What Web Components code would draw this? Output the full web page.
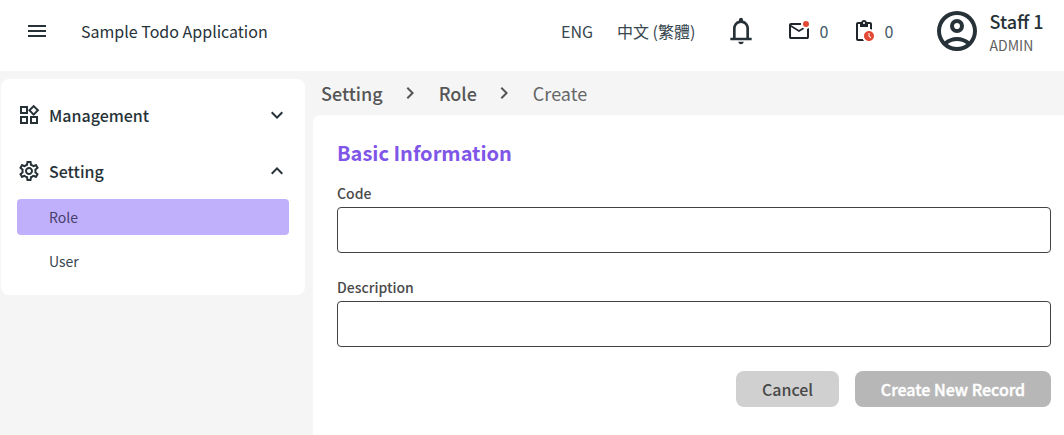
<!DOCTYPE html>
<html lang="zh-Hant">
<head>
<meta charset="utf-8">
<title>Sample Todo Application</title>
<style>
html,body{margin:0;height:100%;overflow:hidden}
body{font-family:"Noto Sans CJK TC","Noto Sans",sans-serif;color:#263238;background:#f5f5f5}
</style>
</head>
<body>
<todo-app></todo-app>
<script>
const ICONS={
menu:'<path d="M3 18h18v-2H3v2zm0-5h18v-2H3v2zm0-7v2h18V6H3z"/>',
bell:'<path d="M4 19v-2h2v-7q0-2.075 1.25-3.687T10.5 4.2v-.7q0-.625.438-1.062T12 2t1.063.438T13.5 3.5v.7q2 .5 3.25 2.113T18 10v7h2v2zm8 3q-.825 0-1.412-.587T10 20h4q0 .825-.587 1.413T12 22m-4-5h8v-7q0-1.65-1.175-2.825T12 6T9.175 7.175T8 10z"/>',
mail:'<path d="M4 20q-.825 0-1.412-.587T2 18V6q0-.825.588-1.412T4 4h10.1q-.1.5-.1 1t.1 1H4l8 5 3.65-2.275q.375.35.813.613t.912.462L12 13 4 8v10h16V9.9q.575-.125 1.075-.35T22 9v9q0 .825-.587 1.413T20 20z"/><circle cx="19" cy="5" r="3" fill="#e24a33"/>',
tasks:'<path d="M18 3h-3.18C14.4 1.84 13.3 1 12 1s-2.4.84-2.82 2H6c-1.1 0-2 .9-2 2v15c0 1.1.9 2 2 2h6.11c-.59-.57-1.07-1.25-1.42-2H6V5h2v3h8V5h2v5.08c.71.1 1.38.31 2 .6V5c0-1.1-.9-2-2-2zm-6 2c-.55 0-1-.45-1-1s.45-1 1-1 1 .45 1 1-.45 1-1 1z"/><path fill="#e24a33" d="M17 12c-2.76 0-5 2.24-5 5s2.24 5 5 5 5-2.24 5-5-2.24-5-5-5zm1.65 7.35L16.5 17.2V14h1v2.79l1.85 1.85-.7.71z"/>',
account:'<path d="M5.85 17.1q1.275-.975 2.85-1.537T12 15t3.3.563 2.85 1.537q.875-1.025 1.363-2.325T20 12q0-3.325-2.337-5.663T12 4 6.338 6.337 4 12q0 1.475.488 2.775T5.85 17.1M12 13q-1.475 0-2.488-1.012T8.5 9.5t1.013-2.488T12 6t2.488 1.013T15.5 9.5t-1.012 2.488T12 13m0 9q-2.075 0-3.9-.788t-3.175-2.137-2.137-3.175T2 12t.788-3.9 2.137-3.175T8.1 2.788 12 2t3.9.788 3.175 2.137T21.213 8.1 22 12t-.788 3.9-2.137 3.175-3.175 2.138T12 22m0-2q1.325 0 2.5-.387t2.15-1.113q-.975-.725-2.15-1.112T12 17t-2.5.388T7.35 18.5q.975.725 2.15 1.113T12 20m0-9q.65 0 1.075-.425T13.5 9.5t-.425-1.075T12 8t-1.075.425T10.5 9.5t.425 1.075T12 11"/>',
widgets:'<path d="M16.66 4.52l2.83 2.83-2.83 2.83-2.83-2.83 2.83-2.83M9 5v4H5V5h4m10 10v4h-4v-4h4M9 15v4H5v-4h4m7.66-13.31L11 7.34 16.66 13l5.66-5.66-5.66-5.65zM11 3H3v8h8V3zm10 10h-8v8h8v-8zm-10 0H3v8h8v-8z"/>',
settings:'<path d="M19.43 12.98c.04-.32.07-.64.07-.98 0-.34-.03-.66-.07-.98l2.11-1.65c.19-.15.24-.42.12-.64l-2-3.46c-.09-.16-.26-.25-.44-.25-.06 0-.12.01-.17.03l-2.49 1c-.52-.4-1.08-.73-1.69-.98l-.38-2.65C14.46 2.18 14.25 2 14 2h-4c-.25 0-.46.18-.49.42l-.38 2.65c-.61.25-1.17.59-1.69.98l-2.49-1c-.06-.02-.12-.03-.18-.03-.17 0-.34.09-.43.25l-2 3.46c-.13.22-.07.49.12.64l2.11 1.65c-.04.32-.07.65-.07.98 0 .33.03.66.07.98l-2.11 1.65c-.19.15-.24.42-.12.64l2 3.46c.09.16.26.25.44.25.06 0 .12-.01.17-.03l2.49-1c.52.4 1.08.73 1.69.98l.38 2.65c.03.24.24.42.49.42h4c.25 0 .46-.18.49-.42l.38-2.65c.61-.25 1.17-.59 1.69-.98l2.49 1c.06.02.12.03.18.03.17 0 .34-.09.43-.25l2-3.46c.12-.22.07-.49-.12-.64l-2.11-1.65zm-1.98-1.71c.04.31.05.52.05.73 0 .21-.02.43-.05.73l-.14 1.13.89.7 1.08.84-.7 1.21-1.27-.51-1.04-.42-.9.68c-.43.32-.84.56-1.25.73l-1.06.43-.16 1.13-.2 1.35h-1.4l-.19-1.35-.16-1.13-1.06-.43c-.43-.18-.83-.41-1.23-.71l-.91-.7-1.06.43-1.27.51-.7-1.21 1.08-.84.89-.7-.14-1.13c-.03-.31-.05-.54-.05-.74s.02-.43.05-.73l.14-1.13-.89-.7-1.08-.84.7-1.21 1.27.51 1.04.42.9-.68c.43-.32.84-.56 1.25-.73l1.06-.43.16-1.13.2-1.35h1.39l.19 1.35.16 1.13 1.06.43c.43.18.83.41 1.23.71l.91.7 1.06-.43 1.27-.51.7 1.21-1.07.85-.89.7.14 1.13zM12 8c-2.21 0-4 1.79-4 4s1.79 4 4 4 4-1.79 4-4-1.79-4-4-4zm0 6c-1.1 0-2-.9-2-2s.9-2 2-2 2 .9 2 2-.9 2-2 2z"/>',
down:'<path d="M16.59 8.59L12 13.17 7.41 8.59 6 10l6 6 6-6z"/>',
up:'<path d="M12 8l-6 6 1.41 1.41L12 10.83l4.59 4.58L18 14z"/>',
right:'<path d="M10 6L8.59 7.41 13.17 12l-4.58 4.59L10 18l6-6z"/>'
};
function define(name,html){
  customElements.define(name,class extends HTMLElement{
    constructor(){
      super();
      this.attachShadow({mode:'open'}).innerHTML=typeof html==='function'?html(this):html;
    }
  });
}
define('app-icon',el=>`<style>:host{display:block;flex:none;width:var(--size,24px);height:var(--size,24px)}svg{display:block;width:100%;height:100%;fill:currentColor}</style>
<svg viewBox="0 0 24 24" aria-hidden="true">${ICONS[el.getAttribute('name')]}</svg>`);

define('count-badge',el=>`<style>:host{display:flex;align-items:center;gap:8.5px;font-size:16px;line-height:24px;color:#455a64}app-icon{color:#20262b}</style>
<app-icon name="${el.getAttribute('icon')}"></app-icon><span><slot></slot></span>`);

define('user-profile',`<style>:host{display:flex;align-items:center;height:62px}app-icon{--size:48px}
div{margin-left:8.5px}b,small{display:block;white-space:nowrap}b{font-size:18px;font-weight:500;line-height:24px;padding-top:2px}small{font-size:14px;line-height:21px;padding-top:2px;color:#616161}</style>
<app-icon name="account"></app-icon><div><b><slot name="name"></slot></b><small><slot name="role"></slot></small></div>`);

define('app-header',`<style>:host{display:flex;height:71px;background:#fff;box-sizing:border-box;padding:0 20.5px 0 25px;align-items:flex-start}
.row{display:flex;align-items:center;height:62px;flex:none;white-space:nowrap}
.title{margin-left:32px;font-size:16px;line-height:24px}
.lang{font-size:16px;line-height:24px;color:#37474f}
.fill{flex:1}
app-icon.bell{--size:32px}</style>
<div class="row"><app-icon name="menu"></app-icon><span class="title"><slot></slot></span></div>
<div class="fill"></div>
<div class="row"><span class="lang" style="width:56px">ENG</span><span class="lang" style="width:108px">中文 (繁體)</span>
<app-icon class="bell" name="bell"></app-icon>
<count-badge icon="mail" style="margin-left:30px;width:65px">0</count-badge><count-badge icon="tasks" style="width:81px">0</count-badge></div>
<user-profile><span slot="name">Staff 1</span><span slot="role">ADMIN</span></user-profile>`);

define('nav-group',el=>`<style>:host{display:flex;align-items:center;height:40px;font-size:16px;font-weight:500;line-height:24px}
span{flex:1;margin-left:8px}</style><app-icon name="${el.getAttribute('icon')}"></app-icon><span><slot></slot></span><app-icon name="${el.getAttribute('arrow')}"></app-icon>`);

define('nav-item',`<style>:host{display:flex;align-items:center;height:36px;padding-left:32px;border-radius:4px;font-size:14px;line-height:20px;color:#37474f}
:host([active]){background:#c0b0fb;color:#46406a}</style><slot></slot>`);

define('side-nav',`<style>:host{display:block;width:272px;height:183px;padding:16px 16px 17px;background:#fff;border-radius:8px}
nav-group+nav-group{margin-top:16px;margin-bottom:8px}nav-item+nav-item{margin-top:8px}</style>
<nav-group icon="widgets" arrow="down">Management</nav-group><nav-group icon="settings" arrow="up">Setting</nav-group>
<nav-item active>Role</nav-item><nav-item>User</nav-item>`);

define('bread-crumbs',`<style>:host{display:flex;align-items:center;height:44px;padding-left:8px;font-size:18px;line-height:26px;font-weight:500;color:#555;box-sizing:border-box}
app-icon{margin:0 16.5px 0 15.5px}.now{font-weight:400;color:#666}</style>
<span>Setting</span><app-icon name="right"></app-icon><span>Role</span><app-icon name="right"></app-icon><span class="now">Create</span>`);

define('text-field',`<style>:host{display:block}label{display:block;font-size:14px;font-weight:500;line-height:20px;color:#4a4a4a;margin-bottom:4px}
input{display:block;width:100%;height:46px;box-sizing:border-box;border:1px solid #424242;border-radius:4px;background:#fff;padding:0 12px;font:inherit;outline:none}</style>
<label><slot></slot></label><input>`);

define('app-button',`<style>:host{display:block}button{display:block;width:100%;height:36px;border:0;border-radius:8px;padding:0;background:#d0d0d0;color:#484848;font:500 16px/36px "Noto Sans CJK TC","Noto Sans",sans-serif;white-space:nowrap}
:host([disabled]) button{background:#b7b7b7;color:#fff;-webkit-text-stroke:.4px #fff}</style><button><slot></slot></button>`);

define('record-form',`<style>:host{display:block;box-sizing:border-box;flex:1;background:#fff;border-radius:8px 0 0 0;padding:23px 13px 0 24px}
h2{margin:0 0 15px;font-size:20px;line-height:30px;font-weight:700;color:#7f56e8}
text-field+text-field{margin-top:24px}
.actions{display:flex;justify-content:flex-end;gap:16px;margin-top:24px}</style>
<h2>Basic Information</h2><text-field>Code</text-field><text-field>Description</text-field>
<div class="actions"><app-button style="width:103px">Cancel</app-button><app-button disabled style="width:196px">Create New Record</app-button></div>`);

define('todo-app',`<style>:host{display:flex;flex-direction:column;height:100vh}
.body{flex:1;display:flex;min-height:0}side-nav{flex:none;margin:8px 8px 0 1px}
main{flex:1;display:flex;flex-direction:column;min-width:0}</style>
<app-header>Sample Todo Application</app-header>
<div class="body"><side-nav></side-nav><main><bread-crumbs></bread-crumbs><record-form></record-form></main></div>`);
</script>
</body>
</html>
